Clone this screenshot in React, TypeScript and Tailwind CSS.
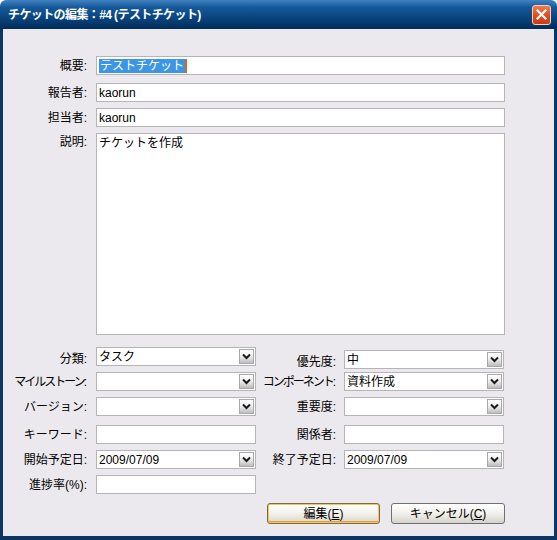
import React from 'react'

const font = "font-['Liberation_Sans','Noto_Sans_CJK_JP',sans-serif]"

function Field({ value, selected }: { value?: string; selected?: boolean }) {
  return (
    <div className="h-[19px] w-full border border-[#b5b5b9] bg-white flex items-center pl-[2px] text-[12px] leading-none text-black">
      {selected ? (
        <span className="bg-[#3d95e6] text-white px-[1px] py-[1px] border-r-2 border-[#d2691e]">{value}</span>
      ) : (
        <span>{value}</span>
      )}
    </div>
  )
}

function Select({ value }: { value?: string }) {
  return (
    <div className="h-[19px] w-full border border-[#b5b5b9] bg-white flex items-center text-[12px] leading-none text-black">
      <span className="flex-1 pl-[2px]">{value}</span>
      <div className="h-[15px] w-[15px] mr-[1px] border border-[#a8a8ac] bg-[linear-gradient(to_bottom,#ffffff,#f0f0f0_45%,#bdbdbd)] flex items-center justify-center">
        <svg width="9" height="7" viewBox="0 0 9 7">
          <path d="M1 1.5 L4.5 5 L8 1.5" stroke="#1a1a1a" strokeWidth="2" fill="none" />
        </svg>
      </div>
    </div>
  )
}

function Label({ text, w }: { text: string; w: string }) {
  return (
    <div className={`${w} flex justify-end whitespace-nowrap text-[12px] leading-none text-black shrink-0`}>
      {text}
    </div>
  )
}

export default function App() {
  return (
    <div className={`w-[557px] h-[540px] flex flex-col ${font}`}>
      {/* Title bar */}
      <div className="h-[29px] shrink-0 flex items-center justify-between pl-[8px] pr-[6px] rounded-t-[6px] bg-[linear-gradient(to_bottom,#4282c0,#15599a_25%,#0a4580_60%,#002d5a)]">
        <span className="text-white text-[12px] font-bold tracking-[-0.6px]">チケットの編集：#4 (テストチケット)</span>
        <div className="w-[19px] h-[20px] rounded-[3px] border border-[#f6d0c0] bg-[linear-gradient(to_bottom,#f07a50,#e24a1e_55%,#c83c14)] flex items-center justify-center">
          <svg width="11" height="11" viewBox="0 0 11 11">
            <path d="M1.5 1.5 L9.5 9.5 M9.5 1.5 L1.5 9.5" stroke="white" strokeWidth="2.2" strokeLinecap="square" />
          </svg>
        </div>
      </div>

      {/* Body */}
      <div className="flex-1 bg-[#ebe9ed] border-l-[3px] border-r-[3px] border-b-[4px] border-[#0b3563] pt-[27px]">
        <div className="flex items-center">
          <Label text="概要:" w="w-[84px]" />
          <div className="ml-[9px] w-[409px]">
            <Field value="テストチケット" selected />
          </div>
        </div>
        <div className="flex items-center mt-[8px]">
          <Label text="報告者:" w="w-[84px]" />
          <div className="ml-[9px] w-[409px]">
            <Field value="kaorun" />
          </div>
        </div>
        <div className="flex items-center mt-[6px]">
          <Label text="担当者:" w="w-[84px]" />
          <div className="ml-[9px] w-[409px]">
            <Field value="kaorun" />
          </div>
        </div>
        <div className="flex items-start mt-[6px]">
          <div className="w-[84px] text-right text-[12px] leading-none text-black pt-[3px]">説明:</div>
          <div className="ml-[9px] w-[409px] h-[202px] border border-[#b5b5b9] bg-white pl-[2px] pt-[3px] text-[12px] leading-none text-black">
            チケットを作成
          </div>
        </div>

        {/* Two-column section */}
        <div className="flex items-start mt-[12px]">
          <Label text="分類:" w="w-[84px] mt-[6px]" />
          <div className="ml-[9px] w-[160px]">
            <Select value="タスク" />
          </div>
          <Label text="優先度:" w="w-[80px] mt-[9px]" />
          <div className="ml-[8px] w-[160px] mt-[3px]">
            <Select value="中" />
          </div>
        </div>
        <div className="flex items-center mt-[3px]">
          <Label text="マイルストーン:" w="w-[84px] tracking-[-2px] pr-[2px]" />
          <div className="ml-[9px] w-[160px]">
            <Select />
          </div>
          <Label text="コンポーネント:" w="w-[80px] tracking-[-2px] pr-[2px]" />
          <div className="ml-[8px] w-[160px]">
            <Select value="資料作成" />
          </div>
        </div>
        <div className="flex items-center mt-[6px]">
          <Label text="バージョン:" w="w-[84px]" />
          <div className="ml-[9px] w-[160px]">
            <Select />
          </div>
          <Label text="重要度:" w="w-[80px]" />
          <div className="ml-[8px] w-[160px]">
            <Select />
          </div>
        </div>
        <div className="flex items-center mt-[9px]">
          <Label text="キーワード:" w="w-[84px]" />
          <div className="ml-[9px] w-[160px]">
            <Field />
          </div>
          <Label text="関係者:" w="w-[80px]" />
          <div className="ml-[8px] w-[160px]">
            <Field />
          </div>
        </div>
        <div className="flex items-center mt-[6px]">
          <Label text="開始予定日:" w="w-[84px]" />
          <div className="ml-[9px] w-[160px]">
            <Select value="2009/07/09" />
          </div>
          <Label text="終了予定日:" w="w-[80px]" />
          <div className="ml-[8px] w-[160px]">
            <Select value="2009/07/09" />
          </div>
        </div>
        <div className="flex items-center mt-[6px]">
          <Label text="進捗率(%):" w="w-[84px]" />
          <div className="ml-[9px] w-[160px]">
            <Field />
          </div>
        </div>

        {/* Buttons */}
        <div className="flex mt-[9px] pl-[264px] gap-[11px]">
          <button className="w-[113px] h-[21px] rounded-[3px] border border-[#7a6a48] bg-[linear-gradient(to_bottom,#ffffff,#f2f1ec_50%,#d8d6cc)] shadow-[inset_0_0_0_1px_#f5c45a,inset_0_-1px_0_1px_#e8a030] text-[12px] leading-none text-black">
            編集(<span className="underline">E</span>)
          </button>
          <button className="w-[114px] h-[21px] rounded-[3px] border border-[#707070] bg-[linear-gradient(to_bottom,#ffffff,#f2f1ec_50%,#d4d2ca)] text-[12px] leading-none text-black">
            キャンセル(<span className="underline">C</span>)
          </button>
        </div>
      </div>
    </div>
  )
}
